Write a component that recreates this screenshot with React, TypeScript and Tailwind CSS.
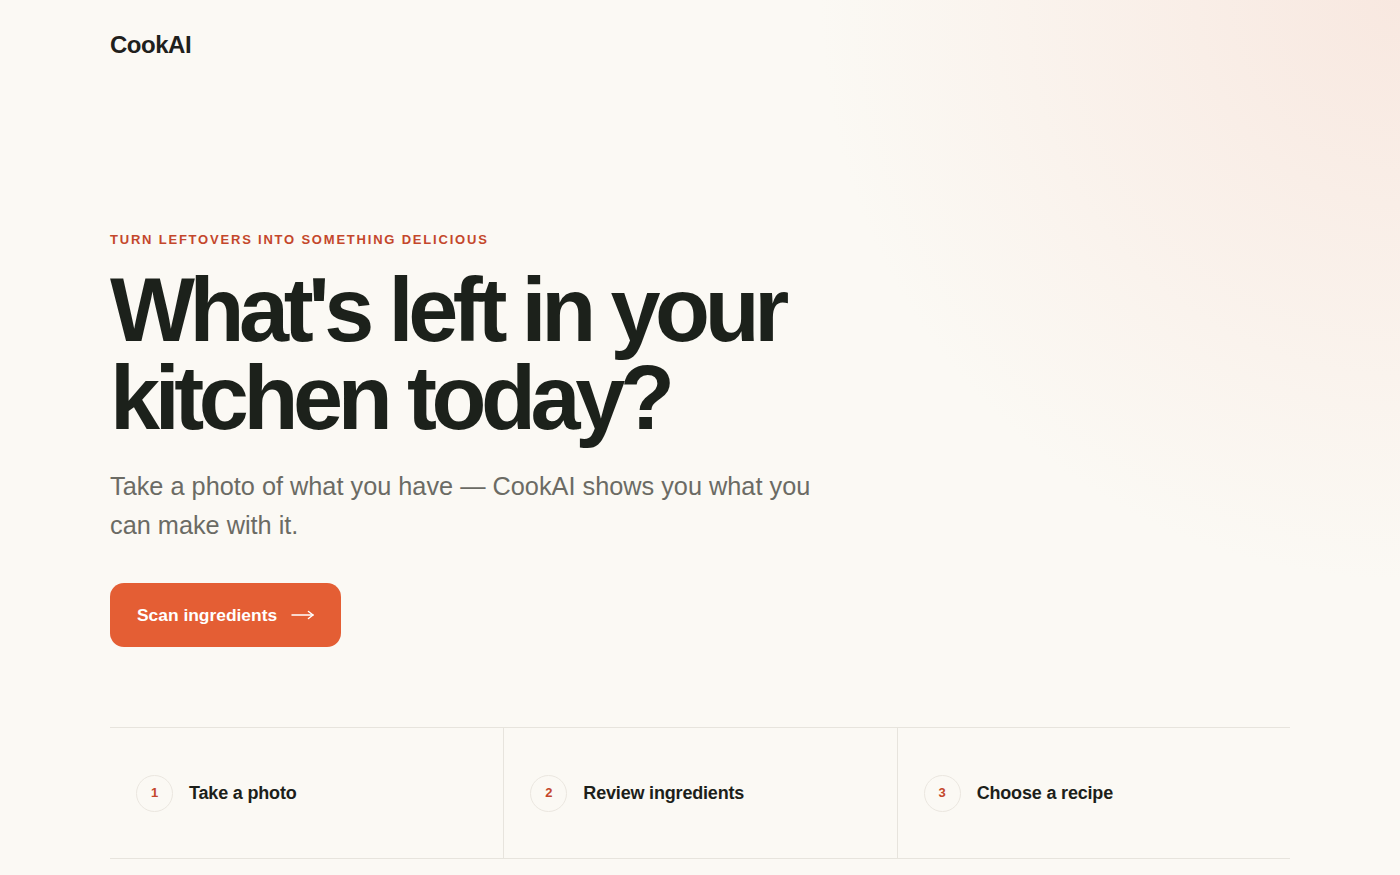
const steps = [
  { n: 1, label: "Take a photo" },
  { n: 2, label: "Review ingredients" },
  { n: 3, label: "Choose a recipe" },
];

function ArrowIcon() {
  return (
    <svg width="23" height="12" viewBox="0 0 23 12" fill="none" stroke="currentColor" strokeWidth="1.5" strokeLinecap="round" strokeLinejoin="round">
      <path d="M1 6h21" />
      <path d="M17.5 2.5L22 6l-4.5 3.5" />
    </svg>
  );
}

export default function App() {
  return (
    <div
      className="min-h-screen w-full bg-[#fbf9f4] bg-[radial-gradient(circle_at_100%_0%,#f8e8e0_0%,rgba(251,249,244,0)_580px)] text-[#1c1f1a]"
      style={{ fontFamily: '"Liberation Sans", Arial, sans-serif' }}
    >
      <div className="mx-auto w-[1180px] pb-4">
        <header className="pt-[29px]">
          <div className="text-[24px] leading-[32px] font-bold tracking-[-0.02em] text-[#1f201c]">CookAI</div>
        </header>

        <section className="mt-[169px]">
          <p className="text-[13px] leading-[20px] font-bold uppercase tracking-[0.138em] text-[#c4472b]">
            Turn leftovers into something delicious
          </p>
          <h1 className="mt-[16px] max-w-[820px] text-[90px] leading-[88px] font-bold tracking-[-0.06em] text-[#1c211b]">
            What's left in your kitchen today?
          </h1>
          <p className="mt-[25px] max-w-[730px] text-[25.3px] leading-[39px] text-[#6b6b64]">
            Take a photo of what you have — CookAI shows you what you can make with it.
          </p>
          <button className="mt-[38px] flex h-16 w-[231px] items-center gap-[14px] rounded-[14px] bg-[#e45e34] pl-[27px] text-[17.4px] font-bold text-white">
            <span>Scan ingredients</span>
            <ArrowIcon />
          </button>
        </section>

        <section className="mt-20 grid grid-cols-3 border-y border-[#e7e4dd]">
          {steps.map((s, i) => (
            <div
              key={s.n}
              className={`flex h-[130px] items-center gap-4 pl-[26px] ${i > 0 ? "border-l border-[#e7e4dd]" : ""}`}
            >
              <div className="flex h-[37px] w-[37px] items-center justify-center rounded-full border border-[#ebe7e0] text-[13px] font-bold text-[#c4472b]">
                {s.n}
              </div>
              <span className="text-[18px] font-bold tracking-[-0.01em] text-[#1d1f1a]">{s.label}</span>
            </div>
          ))}
        </section>
      </div>
    </div>
  );
}
